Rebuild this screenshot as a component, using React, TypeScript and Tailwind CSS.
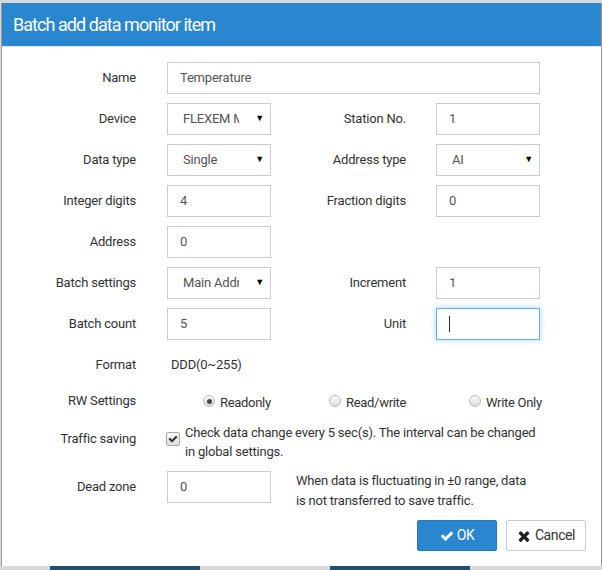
import { useState } from "react";

const font = { fontFamily: 'Roboto, "Liberation Sans", sans-serif' };

function Label({ children, right }: { children: React.ReactNode; right?: boolean }) {
  return (
    <div className={`${right ? "w-[135px]" : "w-[134px]"} shrink-0 text-right text-[13px] tracking-[-0.2px] text-[#333]`}>
      {children}
    </div>
  );
}

function TextBox({ value, wide, focused }: { value: string; wide?: boolean; focused?: boolean }) {
  return (
    <div
      className={`flex h-[32px] shrink-0 items-center border bg-white pl-[12px] text-[13px] tracking-[-0.2px] text-[#555] ${
        wide ? "w-[373px]" : "w-[104px]"
      } ${focused ? "border-[#66afe9] shadow-[0_0_6px_rgba(102,175,233,0.6)]" : "border-[#ccc]"}`}
    >
      {focused ? <span className="h-[16px] w-px bg-[#333]" /> : value}
    </div>
  );
}

function Select({ value }: { value: string }) {
  return (
    <div className="relative flex h-[32px] w-[104px] shrink-0 items-center border border-[#ccc] bg-white pl-[15px] text-[13px] tracking-[-0.2px] text-[#555]">
      <span className="w-[56px] overflow-hidden whitespace-nowrap">{value}</span>
      <span className="absolute right-[6px] top-[8px] text-[9px] text-black">▼</span>
    </div>
  );
}

function Radio({ checked, label }: { checked?: boolean; label: string }) {
  return (
    <div className="flex items-center gap-[5px]">
      <span className="flex h-[12px] w-[12px] items-center justify-center rounded-full border border-[#bbb] bg-gradient-to-b from-[#fafafa] to-[#ddd]">
        {checked && <span className="h-[5px] w-[5px] rounded-full bg-[#444]" />}
      </span>
      <span className="mt-[3px] text-[13px] tracking-[-0.3px] text-[#333]">{label}</span>
    </div>
  );
}

const check =
  "M1671 566q0 40-28 68l-724 724-136 136q-28 28-68 28t-68-28l-136-136-362-362q-28-28-28-68t28-68l136-136q28-28 68-28t68 28l294 295 656-657q28-28 68-28t68 28l136 136q28 28 28 68z";

export default function App() {
  const [unit] = useState("");
  return (
    <div className="relative h-[570px] w-[602px] overflow-hidden bg-[#d6d9dc]" style={font}>
      <div className="absolute bottom-0 left-[50px] h-[4px] w-[150px] bg-[#1f4f6f]" />
      <div className="absolute bottom-0 left-[330px] h-[4px] w-[140px] bg-[#1f4f6f]" />
      <div className="ml-[1px] mt-[3px] flex h-[563px] w-[601px] flex-col border-l border-r border-[#999] bg-white">
        <div className="flex h-[43px] items-center bg-[#2a87cf] pl-[11px] text-[18px] tracking-[-0.95px] text-white">
          Batch add data monitor item
        </div>
        <div className="h-px bg-[#dbe7f1]" />

        <div className="flex flex-col gap-[9px] pt-[15px]">
          <div className="flex items-center">
            <Label>Name</Label>
            <div className="ml-[31px]">
              <TextBox value="Temperature" wide />
            </div>
          </div>

          <div className="flex items-center">
            <Label>Device</Label>
            <div className="ml-[31px]"><Select value="FLEXEM Modbus" /></div>
            <Label right>Station No.</Label>
            <div className="ml-[30px]"><TextBox value="1" /></div>
          </div>

          <div className="flex items-center">
            <Label>Data type</Label>
            <div className="ml-[31px]"><Select value="Single" /></div>
            <Label right>Address type</Label>
            <div className="ml-[30px]"><Select value="AI" /></div>
          </div>

          <div className="flex items-center">
            <Label>Integer digits</Label>
            <div className="ml-[31px]"><TextBox value="4" /></div>
            <Label right>Fraction digits</Label>
            <div className="ml-[30px]"><TextBox value="0" /></div>
          </div>

          <div className="flex items-center">
            <Label>Address</Label>
            <div className="ml-[31px]"><TextBox value="0" /></div>
          </div>

          <div className="flex items-center">
            <Label>Batch settings</Label>
            <div className="ml-[31px]"><Select value="Main Address" /></div>
            <Label right>Increment</Label>
            <div className="ml-[30px]"><TextBox value="1" /></div>
          </div>

          <div className="flex items-center">
            <Label>Batch count</Label>
            <div className="ml-[31px]"><TextBox value="5" /></div>
            <Label right>Unit</Label>
            <div className="ml-[30px]"><TextBox value={unit} focused /></div>
          </div>

          <div className="flex h-[32px] items-center">
            <Label>Format</Label>
            <div className="ml-[35px] text-[13px] tracking-[-0.2px] text-[#333]">DDD(0~255)</div>
          </div>
        </div>

        <div className="mt-[10px] flex h-[20px] items-center">
          <Label>RW Settings</Label>
          <div className="ml-[67px] w-[126px]"><Radio checked label="Readonly" /></div>
          <div className="w-[140px]"><Radio label="Read/write" /></div>
          <Radio label="Write Only" />
        </div>

        <div className="mt-[12px] flex items-start">
          <div className="pt-[6px]"><Label>Traffic saving</Label></div>
          <div className="ml-[30px] mt-[9px] flex h-[14px] w-[14px] shrink-0 items-center justify-center rounded-[2px] border border-[#aaa] bg-gradient-to-b from-[#fafafa] to-[#ddd]">
            <svg viewBox="0 0 1792 1792" className="h-[10px] w-[10px]" fill="#333">
              <path d={check} />
            </svg>
          </div>
          <div className="ml-[5px] w-[352px] text-[13px] leading-[19px] tracking-[-0.2px] text-[#333]">
            Check data change every 5 sec(s). The interval can be changed in global settings.
          </div>
        </div>

        <div className="mt-[2px] flex items-center">
          <Label>Dead zone</Label>
          <div className="ml-[31px]"><TextBox value="0" /></div>
          <div className="ml-[25px] mt-[8px] w-[234px] text-[13px] leading-[20px] tracking-[-0.2px] text-[#333]">
            When data is fluctuating in ±0 range, data is not transferred to save traffic.
          </div>
        </div>

        <div className="mt-[9px] flex justify-end gap-[9px] pr-[15px]">
          <button className="flex h-[31px] w-[80px] items-center justify-center gap-[3px] rounded-[2px] border border-[#2479bb] bg-[#2a87cf] text-[14px] tracking-[-0.4px] text-white">
            <svg viewBox="0 0 1792 1792" className="h-[14px] w-[14px]" fill="white">
              <path d={check} />
            </svg>
            OK
          </button>
          <button className="flex h-[31px] w-[80px] items-center justify-center gap-[4px] rounded-[2px] border border-[#ccc] bg-white text-[14px] tracking-[-0.4px] text-[#333]">
            <svg viewBox="0 0 1408 1792" className="h-[16px] w-[14px]" fill="#222">
              <path d="M1298 1322q0 40-28 68l-136 136q-28 28-68 28t-68-28l-294-294-294 294q-28 28-68 28t-68-28l-136-136q-28-28-28-68t28-68l294-294-294-294q-28-28-28-68t28-68l136-136q28-28 68-28t68 28l294 294 294-294q28-28 68-28t68 28l136 136q28 28 28 68t-28 68l-294 294 294 294q28 28 28 68z" />
            </svg>
            Cancel
          </button>
        </div>
      </div>
    </div>
  );
}
